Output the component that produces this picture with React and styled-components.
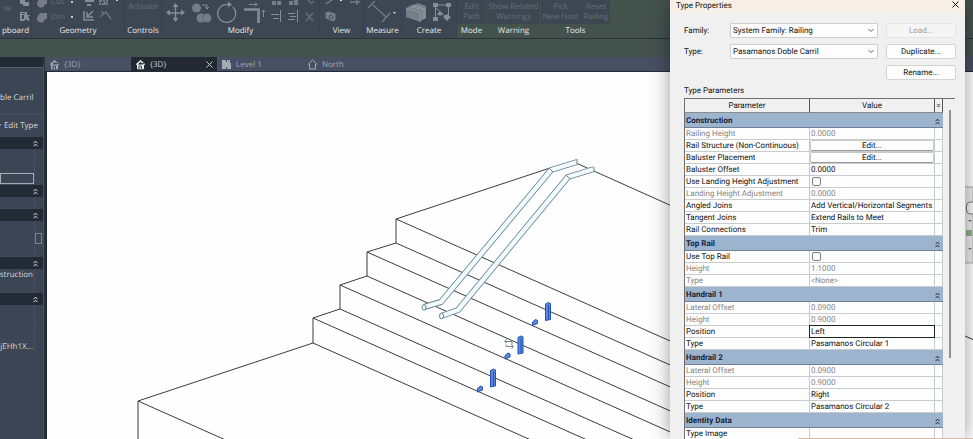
import React, { Fragment } from 'react'
import styled, { createGlobalStyle, ThemeProvider } from 'styled-components'

const theme = {
  color: {
    ribbon: '#3d4653',
    context: '#44524e',
    tabs: '#474f62',
    tabActive: '#222933',
    panel: '#3b4553',
    panelHeader: '#222b35',
    dialog: '#f0f0f0',
    category: '#9db4cf',
    line: '#c9cccf',
    iconDim: '#666f7a',
  },
}

const GlobalStyle = createGlobalStyle`
  * {
    box-sizing: border-box;
  }
  body {
    margin: 0;
    overflow: hidden;
    font-family: 'Open Sans', 'Noto Sans', sans-serif;
    font-size: 8px;
    text-rendering: geometricPrecision;
  }
  button, input, select {
    font: inherit;
    color: inherit;
    margin: 0;
    padding: 0;
    text-rendering: inherit;
  }
`

const Window = styled.div`
  position: relative;
  display: flex;
  flex-direction: column;
  height: 100vh;
  overflow: hidden;
  background: ${props => props.theme.color.context};
`

/* Ribbon */

const Ribbon = styled.header`
  display: flex;
  border-bottom: 1px solid #2c3438;
`

const Group = styled.section`
  flex: 0 0 ${props => props.$width}px;
  background: ${props => (props.$context ? 'transparent' : props.theme.color.ribbon)};
  border-right: 1px solid ${props => (props.$context ? 'transparent' : '#374150')};
`

const Tools = styled.div`
  display: flex;
  align-items: flex-end;
  justify-content: ${props => props.$justify || 'center'};
  gap: ${props => props.$gap || 0}px;
  height: 24px;
  padding-left: ${props => props.$pad || 0}px;
  overflow: hidden;
  background: ${props => props.theme.color.ribbon};
`

const GroupName = styled.h2`
  margin: 0;
  font-size: 8px;
  font-weight: 400;
  line-height: 14px;
  text-align: center;
  white-space: nowrap;
  color: #e6e9ec;
`

const ToolStack = styled.div`
  display: flex;
  flex-direction: column;
`

const Tool = styled.button`
  display: flex;
  align-items: center;
  justify-content: center;
  gap: 3px;
  height: ${props => props.$height || 15}px;
  border: 0;
  background: none;
  white-space: pre;
  line-height: 10px;
  color: ${props => props.theme.color.iconDim};
`

const Caret = styled.span`
  width: 2px;
  height: 2px;
  margin-left: ${props => props.$gap || 3}px;
  background: #c5cad0;
`

/* Document tabs */

const Strip = styled.div`
  flex: 0 0 18px;
`

const Body = styled.div`
  display: flex;
  flex: 1;
  min-height: 0;
`

const Main = styled.main`
  display: flex;
  flex-direction: column;
  flex: 1;
  min-width: 0;
  border-left: 1px solid #2b333e;
`

const Tabs = styled.nav`
  display: flex;
  flex: 0 0 15px;
  background: ${props => props.theme.color.tabs};
  border-bottom: 1px solid #232a35;
`

const Tab = styled.a`
  display: flex;
  align-items: center;
  gap: 4px;
  width: 86px;
  padding: 0 4px;
  text-decoration: none;
  white-space: nowrap;
  color: ${props => (props.$active ? '#c5cad2' : '#a1a8b4')};
  background: ${props => (props.$active ? props.theme.color.tabActive : 'transparent')};
  svg:last-child:not(:first-child) {
    margin-left: auto;
  }
`

const Canvas = styled.div`
  flex: 1;
  min-height: 0;
  background: #fefefe;
  border-left: 2px solid #222a36;
  svg {
    display: block;
    width: 100%;
    height: 100%;
  }
`

/* Properties palette */

const Palette = styled.aside`
  flex: 0 0 44px;
  overflow: hidden;
  background: ${props => props.theme.color.panel};
  border-top: 10px solid #222a34;
  border-right: 1px solid #485260;
  color: #d6dade;
`

const TypePicker = styled.div`
  display: flex;
  justify-content: flex-end;
  gap: 2px;
  height: 48px;
  padding: 24px 6px 0 0;
  border-top: 1px solid #56606e;
  border-bottom: 1px solid #465160;
  line-height: 12px;
  white-space: nowrap;
`

const EditType = styled.button`
  display: flex;
  align-items: center;
  justify-content: flex-end;
  gap: 3px;
  width: 100%;
  height: 22px;
  padding: 0 5px 2px 0;
  border: 0;
  background: none;
  white-space: nowrap;
`

const PaletteHeader = styled.div`
  display: flex;
  align-items: center;
  justify-content: flex-end;
  height: 12px;
  padding-right: 5px;
  color: #e3e7ea;
  background: ${props => props.theme.color.panelHeader};
`

const PaletteRow = styled.div`
  display: flex;
  justify-content: flex-end;
  height: 12px;
  margin-right: 8px;
  padding-right: ${props => (props.$text ? 1 : 0)}px;
  border-right: 1px solid #465160;
  border-bottom: 1px solid #404a58;
  line-height: 11px;
  white-space: nowrap;
`

const PaletteInput = styled.input`
  width: 100%;
  border: 1px solid #a5adb6;
  background: none;
`

const PaletteButton = styled.button`
  flex: 0 0 7px;
  height: 11px;
  margin-right: -8px;
  border: 1px solid #7b8591;
  background: none;
`

/* Dialog */

const Dialog = styled.section`
  position: absolute;
  top: 0;
  right: 8px;
  bottom: 0;
  width: 295px;
  overflow: hidden;
  background: ${props => props.theme.color.dialog};
  font-family: Roboto, 'Open Sans', sans-serif;
  color: #111;
`

const DialogShadow = styled.div`
  position: absolute;
  top: 0;
  right: 8px;
  bottom: 0;
  width: 295px;
  box-shadow: 0 0 18px rgba(0, 0, 0, 0.4);
`

const TitleBar = styled.header`
  display: flex;
  align-items: flex-start;
  justify-content: space-between;
  height: 13px;
  padding: 0 6px;
  background: #f8f0e6;
`

const Title = styled.h1`
  margin: 0;
  font-size: 8px;
  font-weight: 400;
  line-height: 11px;
`

const Close = styled.button`
  display: flex;
  padding: 1px 0;
  border: 0;
  background: none;
`

const Form = styled.div`
  display: grid;
  grid-template-columns: 46px 1fr 70px;
  column-gap: 0;
  row-gap: 6px;
  align-items: center;
  padding: 10px 9px 4px 14px;
`

const Select = styled.select`
  appearance: none;
  width: 148px;
  height: 15px;
  padding: 0 2px;
  border: 1px solid #cfcfcf;
  border-radius: 1px;
  background: #fdfdfd;
`

const SelectBox = styled.div`
  position: relative;
  height: 15px;
  svg {
    position: absolute;
    top: 5px;
    left: 138px;
  }
`

const PushButton = styled.button`
  grid-column: 3;
  height: 15px;
  border: 1px solid #d4d4d4;
  border-radius: 2px;
  background: #fdfdfd;
  &:disabled {
    color: #a0a0a0;
    background: #f5f5f5;
    border-color: #e4e4e4;
  }
`

const Caption = styled.p`
  margin: 0 0 0 14px;
  line-height: 14px;
`

const Listing = styled.div`
  display: flex;
  margin: 0 10px 0 14px;
  border-top: 1px solid #6f6f6f;
`

const Table = styled.table`
  flex: 1;
  table-layout: fixed;
  width: 100%;
  border-collapse: separate;
  border-spacing: 0;
  border-left: 1px solid #6f6f6f;
  background: #fefefe;
`

const HeadCell = styled.th`
  width: ${props => props.$width};
  height: 14px;
  padding: 0;
  border-right: 1px solid #555;
  border-bottom: 1px solid #8b8b8b;
  background: ${props => props.theme.color.dialog};
  font-weight: 400;
  line-height: 13px;
`

const CategoryCell = styled.th`
  height: 15px;
  padding: 2px 3px 0 1px;
  border-bottom: 1px solid #6e8199;
  background: ${props => props.theme.color.category};
  text-align: left;
  line-height: 12px;
  color: #15233a;
`

const CategoryLine = styled.div`
  display: flex;
  align-items: center;
  justify-content: space-between;
`

const Cell = styled.td`
  height: 12px;
  padding: ${props => (props.$flush ? 0 : '0 1px')};
  border-right: 1px solid ${props => props.theme.color.line};
  border-bottom: 1px solid ${props => props.theme.color.line};
  line-height: 11px;
  white-space: nowrap;
  color: ${props => (props.$dim ? '#858585' : 'inherit')};
`

const EditButton = styled.button`
  display: block;
  width: 100%;
  height: 11px;
  border: 1px solid #c8c8c8;
  border-bottom-color: #9a9a9a;
  border-radius: 2px;
  background: #fdfdfd;
  line-height: 9px;
`

const Check = styled.input`
  appearance: none;
  display: block;
  width: 9px;
  height: 9px;
  margin: 1px 2px;
  border: 1px solid #808080;
  border-radius: 2px;
  background: #fdfdfd;
`

const ValueInput = styled.input`
  display: block;
  width: 100%;
  height: 11px;
  padding: 0 1px;
  border: 0;
  outline: 1px solid #222;
  background: #fff;
`

const Scrollbar = styled.div`
  flex: 0 0 12px;
  padding: 11px 4px 0 6px;
`

const Thumb = styled.div`
  height: 248px;
  background: #929292;
`

const BottomEdge = styled.div`
  position: absolute;
  right: 0;
  bottom: 0;
  left: 82%;
  height: 1px;
  background: #dcb9a5;
`

const Chevrons = () => (
  <svg width="5" height="7" viewBox="0 0 5 7" fill="none" stroke="currentColor">
    <path d="M.5 3.2 2.5 1.2l2 2M.5 6.2l2-2 2 2" />
  </svg>
)

const House = ({ color = '#a5abb5', outline }) => (
  <svg width="11" height="11" viewBox="0 0 11 11" fill={outline ? 'none' : color} stroke={color}>
    {outline ? (
      <path d="M.8 5.6 5.5 1l4.7 4.6M2.5 5v5h6V5" />
    ) : (
      <Fragment>
        <path d="M1 5.6 5.5 1.4 10 5.6M2.5 5.2v4.6h6V5.2L5.5 2.4z" />
        <path d="M4 10V7h2.4v3M6 4.6h3" stroke="#39414f" />
      </Fragment>
    )}
  </svg>
)

const PlanIcon = () => (
  <svg width="11" height="11" viewBox="0 0 11 11" fill="#a5abb5">
    <path d="M1 1h4v2h1V1h3v3h1v6H6V8H5v2H1z" />
  </svg>
)

const CloseIcon = ({ size = 7 }) => (
  <svg width={size} height={size} viewBox="0 0 7 7" fill="none" stroke="currentColor">
    <path d="M.5.5l6 6M6.5.5l-6 6" />
  </svg>
)

const BlobIcon = () => (
  <svg width="12" height="12" viewBox="0 0 12 12" fill="#747d88">
    <path d="M4 2h7v6H9a4 4 0 1 1-7-3z" />
  </svg>
)

const clipboardIcons = (
  <svg width="12" height="24" viewBox="0 0 12 24" fill="#858d98">
    <path d="M1 0h5v2h4v4H4V4H1zM1 12h7v3H3v4h2v2H1zM5 15h6l-2 2 2 3-2 1-2-2-2 2z" />
    <path d="M3 13.5h3" stroke="#3d4653" />
  </svg>
)

const geometryIcons = (
  <svg width="36" height="24" viewBox="0 0 36 24" fill="none" stroke="#858d98">
    <path d="M2 0h9v2H2zM4 4h4v2H4z" fill="#858d98" stroke="none" />
    <path d="M17 1h5v3h-5zM24 0v4h-4" strokeWidth="1.6" strokeDasharray="2 1" />
    <path d="M1 11v9h10M4 17l6-6M4 12v5h6" strokeWidth="1.5" />
    <path d="M17 17l6-5 5 7M21 13l-3-1" stroke="#666f7a" strokeWidth="1.6" />
    <path d="M33 0h2v1h-2z" fill="#c5cad0" stroke="none" />
  </svg>
)

const modifyIcons = (
  <svg width="157" height="24" viewBox="163 0 157 24" fill="none" stroke="#858d98">
    <path d="M176.500 6v14M169.500 13h14" strokeWidth="1.4" />
    <path
      d="M176.500 3l3 4h-6zM176.500 22l3-4h-6zM167 12.500l4-3v6zM186 12.500l-4-3v6z"
      fill="#858d98"
      stroke="none"
    />
    <circle cx="197.500" cy="8" r="4.500" fill="#747d88" stroke="none" />
    <circle cx="202" cy="18" r="4.500" fill="#747d88" stroke="none" />
    <circle cx="208" cy="18" r="4.500" fill="#747d88" stroke="#4a535f" strokeWidth=".6" />
    <path d="M203 5h5v4M206 7l2 2 2-2" />
    <path d="M234 7a9 9 0 1 1-5-2.500" strokeWidth="1.300" />
    <path d="M229 1.500l4 3-4 3z" fill="#858d98" stroke="none" />
    <path d="M245 9.500h14.500V23" strokeWidth="2.600" />
    <path d="M250 4.500h8M256 2.500l2 2-2 2M264.500 17V10M262.500 12l2-2 2 2" />
    <path d="M273 1h4v4h-4zM278 1h4v4h-4zM290 1h4v4h-4zM295 0h4v5h-4z" fill="#747d88" stroke="none" />
    <path d="M272 14.500h8M274 18.500h6M281.500 10v12M289 13.500h7M291 16.500h6M289 19.500h7M298.500 10v12" />
    <path d="M307 13l7 8M314 13l-7 8M309 0l3 3 3-2" stroke="#666f7a" strokeWidth="1.400" />
  </svg>
)

const viewIcons = (
  <svg width="40" height="24" viewBox="322 0 40 24" fill="none" stroke="#747d88">
    <path d="M326 4l6-4M350 2h10M357 0v5" strokeWidth="1.500" />
    <path d="M326 13l3-1 6 2v6l-2 1-7-3z" fill="#747d88" />
    <circle cx="331" cy="17" r="2" stroke="#4a535f" />
    <path d="M340 0h2v1h-2z" fill="#e0e0e0" stroke="none" />
  </svg>
)

const measureIcons = (
  <svg width="32" height="24" viewBox="367 0 32 24" fill="none" stroke="#747d88">
    <path d="M373 5l13 12M368 8l7-7M382 22l8-9" strokeWidth="1.200" />
    <path d="M393 12h3l-1.500 2z" fill="#d0d4d8" stroke="none" />
  </svg>
)

const createIcons = (
  <svg width="48" height="24" viewBox="405 0 48 24" fill="#858d98">
    <path d="M406 8l12-5 8 3v12l-4 2-2 2-14-5z" fill="#747d88" />
    <path d="M406 8l14 4v10M409 6l14 4v10M412 5l13 4v10" fill="none" stroke="#9aa1aa" strokeWidth=".8" />
    <path d="M433 3h5v4h-5zM446 3h5v4h-5zM433 17h5v4h-5zM447 14l4 3-4 4-4-4zM440 11l3 3-3 2-3-2z" />
    <path d="M438 5h8M448.500 7v8M435.500 7v10M436 8l9 8" fill="none" stroke="#858d98" />
  </svg>
)

const slope = [
  [396, 219],
  [396, 243],
  [367, 252],
  [367, 276],
  [340, 285],
  [340, 309],
  [313, 318],
  [313, 343],
  [138, 401],
]

const rails = [
  '577,162 551,170 441,302 424,307',
  '594,169 568,177 458,310 441,316',
]

const balusters = [
  [548, 303],
  [520.500, 336.500],
  [493, 369.500],
]

const Scene = () => (
  <svg viewBox="47 72 926 367" preserveAspectRatio="xMinYMin slice" fill="none">
    <g stroke="#3c3c3c">
      {slope.map(([x, y]) => (
        <path key={y} d={`M${x} ${y}l600 267`} />
      ))}
      <path d="M576 163l97 43.500M138 401l175-58v-25l27-9v-24l27-9v-24l29-9v-24l154-51M138 401v60" />
    </g>
    {rails.map(points => (
      <g key={points} strokeLinejoin="round">
        <polyline points={points} stroke="#628392" strokeWidth="6" />
        <polyline points={points} stroke="#f1fafd" strokeWidth="4.400" />
      </g>
    ))}
    <g fill="#f1fafd" stroke="#628392">
      <ellipse cx="424" cy="307.500" rx="2" ry="2.800" />
      <ellipse cx="441.500" cy="316" rx="2" ry="2.800" />
      <path d="M577 159v5M594 167v5M549 168l4 4M566 175l4 4" />
    </g>
    {balusters.map(([x, y]) => (
      <g key={x} fill="#5d86dc" stroke="#2351b4">
        <path d={`M${x - 2.5} ${y + 1}l3-1.500 2 1v16l-5 1zM${x + 0.5} ${y + 2}v14`} />
        <path d={`M${x - 15.500} ${y + 19}l3-2.500 2 1v3l-5 2z`} />
      </g>
    ))}
    <path d="M505 341.500h7v3M507 339l-2.500 2.500 2.500 1.500M513 346.500h-7v-2M511 344.500l2.500 2-2 2" stroke="#527482" strokeWidth=".8" />
    <path d="M960 187h13v76h-13z" fill="#ececec" stroke="#aaa" />
    <rect x="966.500" y="202" width="12" height="12" rx="4" fill="#f5f5f5" stroke="#777" />
    <path d="M966 230h6v6h-6z" fill="#8cb386" />
    <path d="M968 220h4l-2 2zM968 248h4l-2 2z" fill="#777" />
    <path d="M965 336l9 4" stroke="#333" />
  </svg>
)

const categories = [
  {
    name: 'Construction',
    rows: [
      { name: 'Railing Height', value: '0.0000', dim: true },
      { name: 'Rail Structure (Non-Continuous)', kind: 'button' },
      { name: 'Baluster Placement', kind: 'button' },
      { name: 'Baluster Offset', value: '0.0000' },
      { name: 'Use Landing Height Adjustment', kind: 'check' },
      { name: 'Landing Height Adjustment', value: '0.0000', dim: true },
      { name: 'Angled Joins', value: 'Add Vertical/Horizontal Segments' },
      { name: 'Tangent Joins', value: 'Extend Rails to Meet' },
      { name: 'Rail Connections', value: 'Trim' },
    ],
  },
  {
    name: 'Top Rail',
    rows: [
      { name: 'Use Top Rail', kind: 'check' },
      { name: 'Height', value: '1.1000', dim: true },
      { name: 'Type', value: '<None>', dim: true },
    ],
  },
  {
    name: 'Handrail 1',
    rows: [
      { name: 'Lateral Offset', value: '0.0900', dim: true },
      { name: 'Height', value: '0.9000', dim: true },
      { name: 'Position', value: 'Left', kind: 'input' },
      { name: 'Type', value: 'Pasamanos Circular 1' },
    ],
  },
  {
    name: 'Handrail 2',
    rows: [
      { name: 'Lateral Offset', value: '0.0900', dim: true },
      { name: 'Height', value: '0.9000', dim: true },
      { name: 'Position', value: 'Right' },
      { name: 'Type', value: 'Pasamanos Circular 2' },
    ],
  },
  {
    name: 'Identity Data',
    rows: [{ name: 'Type Image', value: '' }],
  },
]

const Value = ({ row, id }) => {
  if (row.kind === 'button') return <EditButton aria-labelledby={id}>Edit...</EditButton>
  if (row.kind === 'check') return <Check type="checkbox" aria-labelledby={id} />
  if (row.kind === 'input') return <ValueInput defaultValue={row.value} aria-labelledby={id} />
  return row.value
}

const ParameterTable = () => (
  <Table>
    <thead>
      <tr>
        <HeadCell $width="125px">Parameter</HeadCell>
        <HeadCell>Value</HeadCell>
        <HeadCell $width="8px">=</HeadCell>
      </tr>
    </thead>
    <tbody>
      {categories.map((category, c) => (
        <Fragment key={category.name}>
          <tr>
            <CategoryCell colSpan={3}>
              <CategoryLine>
                {category.name}
                <Chevrons />
              </CategoryLine>
            </CategoryCell>
          </tr>
          {category.rows.map((row, r) => {
            const id = `parameter-${c}-${r}`
            return (
              <tr key={id}>
                <Cell id={id} $dim={row.dim}>
                  {row.name}
                </Cell>
                <Cell $dim={row.dim} $flush={Boolean(row.kind)}>
                  <Value row={row} id={id} />
                </Cell>
                <Cell />
              </tr>
            )
          })}
        </Fragment>
      ))}
    </tbody>
  </Table>
)

const SelectArrow = () => (
  <svg width="6" height="5" viewBox="0 0 6 5" fill="none" stroke="#666">
    <path d="M.5 1 3 3.500 5.500 1" />
  </svg>
)

const TypeProperties = () => (
  <Dialog role="dialog" aria-labelledby="dialog-title">
    <TitleBar>
      <Title id="dialog-title">Type Properties</Title>
      <Close aria-label="Close">
        <CloseIcon />
      </Close>
    </TitleBar>
    <Form>
      <label htmlFor="family">Family:</label>
      <SelectBox>
        <Select id="family">
          <option>System Family: Railing</option>
        </Select>
        <SelectArrow />
      </SelectBox>
      <PushButton disabled>Load...</PushButton>
      <label htmlFor="type">Type:</label>
      <SelectBox>
        <Select id="type">
          <option>Pasamanos Doble Carril</option>
        </Select>
        <SelectArrow />
      </SelectBox>
      <PushButton>Duplicate...</PushButton>
      <PushButton>Rename...</PushButton>
    </Form>
    <Caption>Type Parameters</Caption>
    <Listing>
      <ParameterTable />
      <Scrollbar>
        <Thumb />
      </Scrollbar>
    </Listing>
  </Dialog>
)

const Properties = () => (
  <Palette>
    <TypePicker>
      ble Carril
      <svg width="5" height="4" viewBox="0 0 5 4">
        <path d="M0 0h4L2 2z" fill="#8a949f" />
      </svg>
    </TypePicker>
    <EditType>
      <svg width="5" height="10" viewBox="0 0 5 10">
        <path d="M0 1h1v3h1V2h1v2h1V0h1v9H3V6H0z" fill="#d8e3ea" />
      </svg>
      Edit Type
    </EditType>
    <PaletteHeader>
      <Chevrons />
    </PaletteHeader>
    <PaletteRow />
    <PaletteRow />
    <PaletteRow>
      <PaletteInput aria-label="Value" />
    </PaletteRow>
    <PaletteHeader>
      <Chevrons />
    </PaletteHeader>
    <PaletteRow />
    <PaletteHeader>
      <Chevrons />
    </PaletteHeader>
    <PaletteRow />
    <PaletteRow>
      <PaletteButton aria-label="Browse" />
    </PaletteRow>
    <PaletteRow />
    <PaletteHeader>
      <Chevrons />
    </PaletteHeader>
    <PaletteRow $text>struction</PaletteRow>
    <PaletteRow />
    <PaletteHeader>
      <Chevrons />
    </PaletteHeader>
    <PaletteRow />
    <PaletteRow />
    <PaletteRow />
    <PaletteRow $text>jEHh1X...</PaletteRow>
  </Palette>
)

export default function App() {
  return (
    <ThemeProvider theme={theme}>
      <GlobalStyle />
      <Window>
        <Ribbon>
          <Group $width={32}>
            <Tools $justify="flex-end" $gap={8}>
              <Tool $height={30}>te</Tool>
              {clipboardIcons}
            </Tools>
            <GroupName>pboard</GroupName>
          </Group>
          <Group $width={93}>
            <Tools $justify="flex-start" $pad={4} $gap={10}>
              <ToolStack>
                <Tool>
                  <BlobIcon />
                  Cut
                  <Caret $gap={4} />
                </Tool>
                <Tool>
                  <BlobIcon />
                  Join
                  <Caret />
                </Tool>
              </ToolStack>
              {geometryIcons}
            </Tools>
            <GroupName>Geometry</GroupName>
          </Group>
          <Group $width={37}>
            <Tools>
              <Tool $height={34}>Activate</Tool>
            </Tools>
            <GroupName>Controls</GroupName>
          </Group>
          <Group $width={158}>
            <Tools>{modifyIcons}</Tools>
            <GroupName>Modify</GroupName>
          </Group>
          <Group $width={44}>
            <Tools>{viewIcons}</Tools>
            <GroupName>View</GroupName>
          </Group>
          <Group $width={38}>
            <Tools>{measureIcons}</Tools>
            <GroupName>Measure</GroupName>
          </Group>
          <Group $width={55}>
            <Tools>{createIcons}</Tools>
            <GroupName>Create</GroupName>
          </Group>
          <Group $width={30} $context>
            <Tools>
              <Tool $height={24}>{'Edit\nPath'}</Tool>
            </Tools>
            <GroupName>Mode</GroupName>
          </Group>
          <Group $width={54} $context>
            <Tools>
              <Tool $height={24}>{'Show Related\nWarnings'}</Tool>
            </Tools>
            <GroupName>Warning</GroupName>
          </Group>
          <Group $width={70} $context>
            <Tools $gap={5}>
              <Tool $height={24}>{'Pick\nNew Host'}</Tool>
              <Tool $height={24}>{'Reset\nRailing'}</Tool>
            </Tools>
            <GroupName>Tools</GroupName>
          </Group>
        </Ribbon>
        <Strip />
        <Body>
          <Properties />
          <Main>
            <Tabs>
              <Tab href="#view-1">
                <House />
                {'{3D}'}
              </Tab>
              <Tab href="#view-2" $active>
                <House color="#eef0f2" />
                {'{3D}'}
                <CloseIcon />
              </Tab>
              <Tab href="#level-1">
                <PlanIcon />
                Level 1
              </Tab>
              <Tab href="#north">
                <House outline />
                North
              </Tab>
            </Tabs>
            <Canvas>
              <Scene />
            </Canvas>
          </Main>
        </Body>
        <DialogShadow />
        <TypeProperties />
        <BottomEdge />
      </Window>
    </ThemeProvider>
  )
}
